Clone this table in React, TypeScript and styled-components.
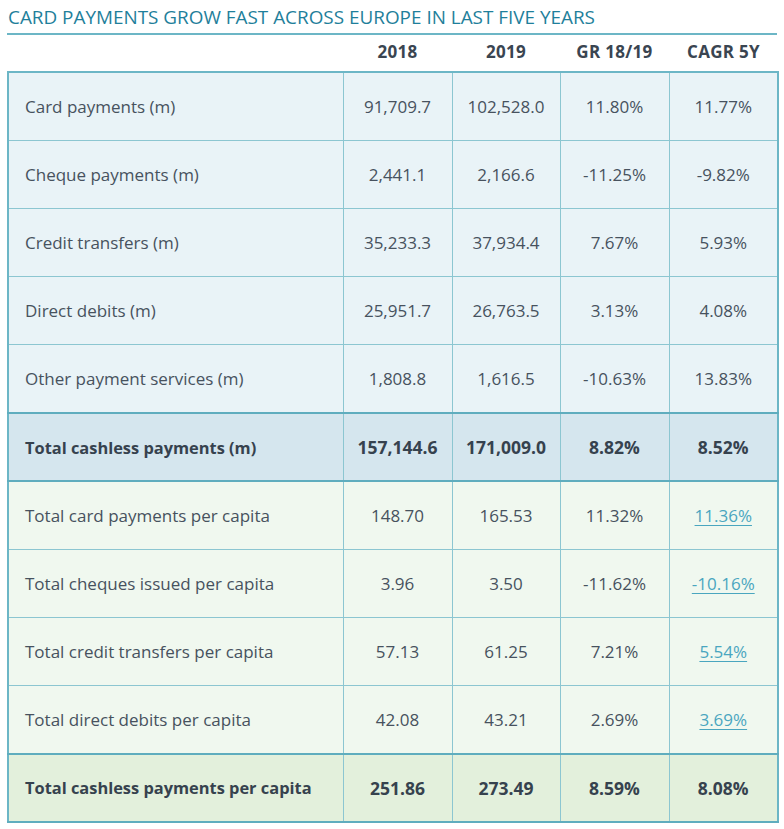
import React from "react";
import styled, { createGlobalStyle } from "styled-components";

const Global = createGlobalStyle`
  html, body { margin: 0; padding: 0; background: #ffffff; }
  body { font-family: "Open Sans", sans-serif; color: #3f4a57; }
`;

const Page = styled.div`
  padding: 2px 7px 0 7px;
  width: 770px;
`;

const Title = styled.h1`
  margin: 0;
  font-family: "Open Sans", sans-serif;
  font-weight: 400;
  font-size: 18.9px;
  line-height: 31px;
  padding-left: 1px;
  color: #1f7f9b;
  border-bottom: 2px solid #6cb6c6;
  white-space: nowrap;
`;

const Table = styled.table`
  width: 770px;
  border-collapse: collapse;
  table-layout: fixed;
`;

const HeadRow = styled.tr`
  height: 37px;
`;

const HeadCell = styled.th`
  padding: 0 0 4px 0;
  font-family: "Open Sans", sans-serif;
  font-weight: 700;
  font-size: 17px;
  letter-spacing: 0.3px;
  color: #3a4551;
  text-align: center;
  vertical-align: middle;
`;

const Body = styled.tbody`
  border: 2px solid #6cb6c6;
`;

type Tone = "blue" | "blueTotal" | "green" | "greenTotal";

const bg: Record<Tone, string> = {
  blue: "#e9f3f7",
  blueTotal: "#d5e6ee",
  green: "#f0f8ef",
  greenTotal: "#e3f0dc",
};

const Row = styled.tr<{ $tone: Tone }>`
  height: 68.2px;
  background: ${(p) => bg[p.$tone]};
  ${(p) =>
    p.$tone === "blueTotal" || p.$tone === "greenTotal"
      ? "border-top: 2px solid #5fadbe; border-bottom: 2px solid #5fadbe;"
      : ""}
`;

const LabelCell = styled.td<{ $bold?: boolean }>`
  padding: 0 0 0 16px;
  border: 1px solid #8cc6d1;
  font-family: "Open Sans", sans-serif;
  font-size: ${(p) => (p.$bold ? "16.4px" : "17px")};
  font-weight: ${(p) => (p.$bold ? 700 : 400)};
  color: ${(p) => (p.$bold ? "#36424e" : "#47525e")};
  text-align: left;
  vertical-align: middle;
  white-space: nowrap;
`;

const NumCell = styled.td<{ $bold?: boolean }>`
  padding: 0;
  border: 1px solid #8cc6d1;
  font-family: "Open Sans", sans-serif;
  font-size: ${(p) => (p.$bold ? "17.5px" : "17px")};
  font-weight: ${(p) => (p.$bold ? 700 : 400)};
  color: ${(p) => (p.$bold ? "#36424e" : "#47525e")};
  text-align: center;
  vertical-align: middle;
  white-space: nowrap;
`;

const Link = styled.a`
  color: #4aa6bf;
  text-decoration: underline;
  text-underline-offset: 3px;
  text-decoration-thickness: 1px;
`;

type R = {
  label: string;
  v: string[];
  tone: Tone;
  bold?: boolean;
  linkLast?: boolean;
};

const rows: R[] = [
  { label: "Card payments (m)", v: ["91,709.7", "102,528.0", "11.80%", "11.77%"], tone: "blue" },
  { label: "Cheque payments (m)", v: ["2,441.1", "2,166.6", "-11.25%", "-9.82%"], tone: "blue" },
  { label: "Credit transfers (m)", v: ["35,233.3", "37,934.4", "7.67%", "5.93%"], tone: "blue" },
  { label: "Direct debits (m)", v: ["25,951.7", "26,763.5", "3.13%", "4.08%"], tone: "blue" },
  { label: "Other payment services (m)", v: ["1,808.8", "1,616.5", "-10.63%", "13.83%"], tone: "blue" },
  { label: "Total cashless payments (m)", v: ["157,144.6", "171,009.0", "8.82%", "8.52%"], tone: "blueTotal", bold: true },
  { label: "Total card payments per capita", v: ["148.70", "165.53", "11.32%", "11.36%"], tone: "green", linkLast: true },
  { label: "Total cheques issued per capita", v: ["3.96", "3.50", "-11.62%", "-10.16%"], tone: "green", linkLast: true },
  { label: "Total credit transfers per capita", v: ["57.13", "61.25", "7.21%", "5.54%"], tone: "green", linkLast: true },
  { label: "Total direct debits per capita", v: ["42.08", "43.21", "2.69%", "3.69%"], tone: "green", linkLast: true },
  { label: "Total cashless payments per capita", v: ["251.86", "273.49", "8.59%", "8.08%"], tone: "greenTotal", bold: true },
];

export default function App() {
  return (
    <Page>
      <Global />
      <Title>CARD PAYMENTS GROW FAST ACROSS EUROPE IN LAST FIVE YEARS</Title>
      <Table>
        <colgroup>
          <col style={{ width: 335 }} />
          <col style={{ width: 109 }} />
          <col style={{ width: 108 }} />
          <col style={{ width: 109 }} />
          <col style={{ width: 109 }} />
        </colgroup>
        <thead>
          <HeadRow>
            <HeadCell />
            <HeadCell>2018</HeadCell>
            <HeadCell>2019</HeadCell>
            <HeadCell>GR 18/19</HeadCell>
            <HeadCell>CAGR 5Y</HeadCell>
          </HeadRow>
        </thead>
        <Body>
          {rows.map((r) => (
            <Row key={r.label} $tone={r.tone}>
              <LabelCell $bold={r.bold}>{r.label}</LabelCell>
              {r.v.map((x, i) => (
                <NumCell key={i} $bold={r.bold}>
                  {r.linkLast && i === 3 ? <Link href="#">{x}</Link> : x}
                </NumCell>
              ))}
            </Row>
          ))}
        </Body>
      </Table>
    </Page>
  );
}
